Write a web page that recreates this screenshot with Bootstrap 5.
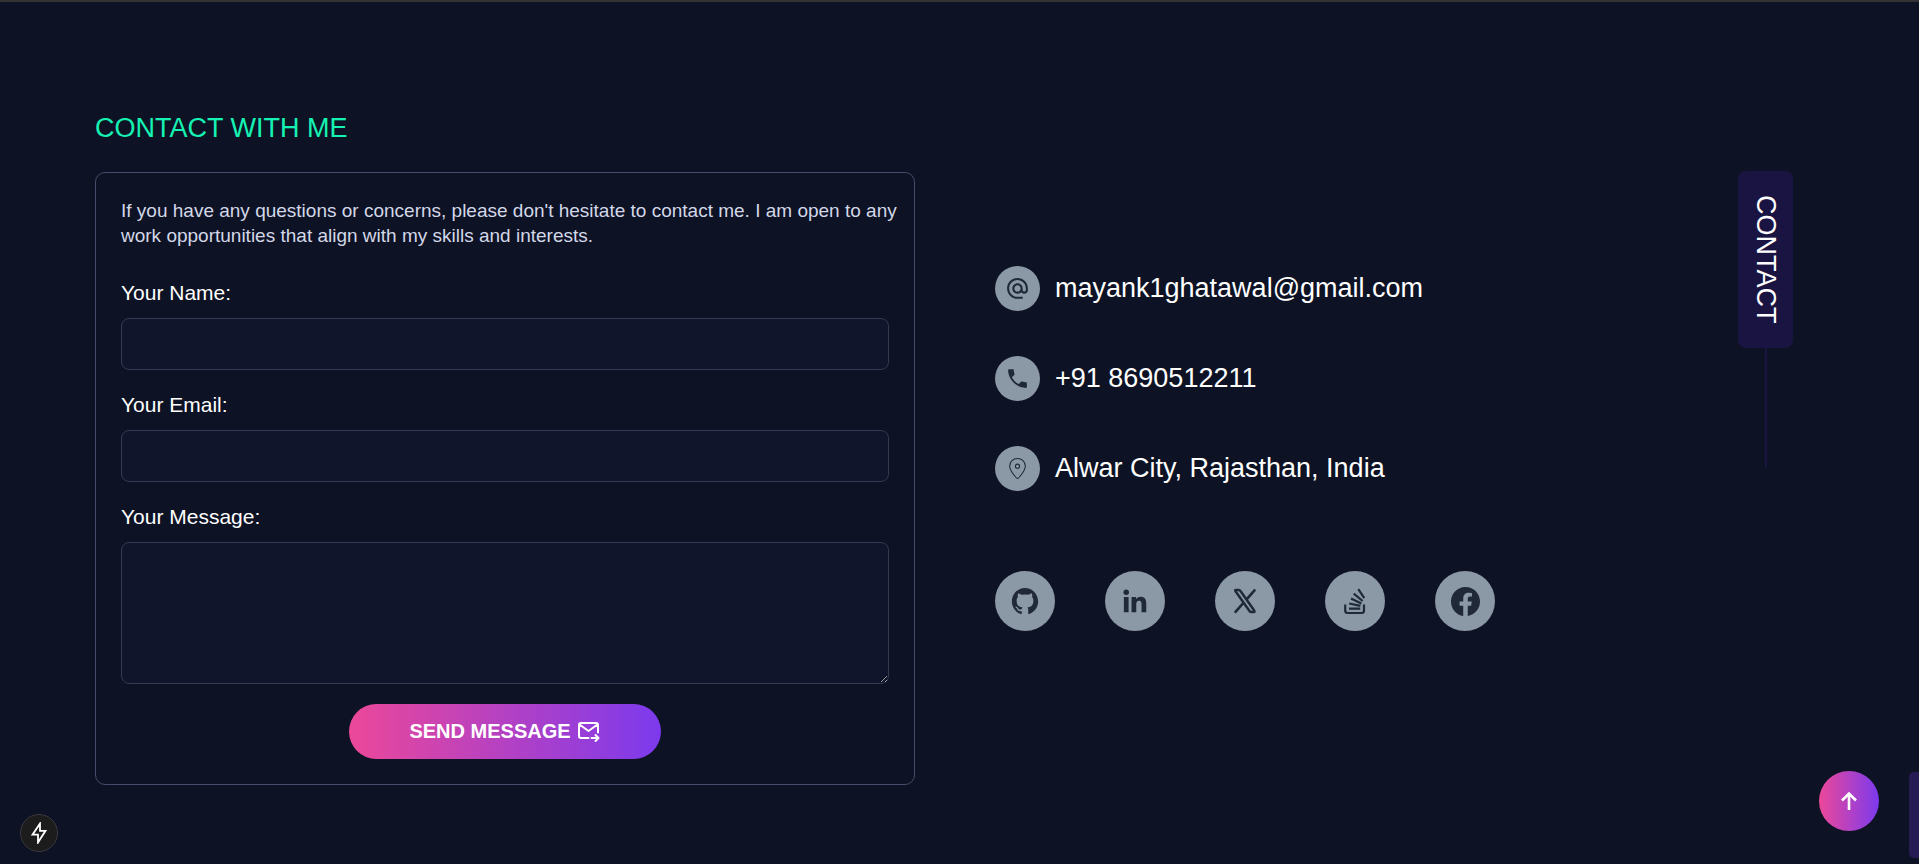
<!DOCTYPE html>
<html lang="en">
<head>
<meta charset="utf-8">
<meta name="viewport" content="width=device-width, initial-scale=1">
<title>Contact</title>
<link href="https://cdn.jsdelivr.net/npm/bootstrap@5.3.0/dist/css/bootstrap.min.css" rel="stylesheet">
<style>
  body { background: #0d1224; color: #fff; font-family: "Liberation Sans", Arial, sans-serif; border-top: 2px solid #333; min-height: 100vh; padding-right: 9px; }
  .contact-wrap { max-width: 1720px; padding-top: 108px; }
  .contact-grid { --bs-gutter-x: 80px; }
  .contact-title { color: #16f2b3; font-size: 27px; line-height: 37px; margin-bottom: 25px; }
  .contact-box { border: 1px solid #464c6a; border-radius: 10px; padding: 25px; }
  .intro { color: #d3d8e8; font-size: 19px; line-height: 25px; margin: 0 -12px 30px 0; }
  .form-label { font-size: 21px; line-height: 30px; margin-bottom: 10px; }
  .form-control, .form-control:focus { background: #11152c; border-color: #353951; border-radius: 8px; color: #fff; height: 52px; }
  .field { margin-bottom: 20px; }
  textarea.form-control, textarea.form-control:focus { height: 142px; display: block; }
  .grad { background: linear-gradient(to right, #ec4899, #7c3aed); color: #fff; border: 0; }
  .send-btn { font-size: 20px; line-height: 30px; font-weight: 700; padding: 12px 60px 13px; gap: 5px; }
  .info-col { padding-top: 2px; }
  .info-list { gap: 45px; font-size: 27px; line-height: 45px; }
  .info-list li { gap: 15px; }
  .info-list a { color: #fff; text-decoration: none; }
  .dot { background: #8b98a5; color: #1f2937; width: 45px; height: 45px; }
  .dot-lg { width: 60px; height: 60px; }
  .socials { gap: 50px; margin-top: 80px; }
  .side-tag { margin: 59px 22px 0 0; }
  .side-text { writing-mode: vertical-rl; background: #1a1443; border-radius: 8px; font-size: 27px; line-height: 35px; padding: 24px 10px; }
  .side-line { width: 2px; height: 119px; background: #1a1443; }
  .to-top { width: 60px; height: 60px; right: 40px; bottom: 33px; }
  .dev-btn { width: 38px; height: 38px; left: 20px; bottom: 12px; background: #1c1c1c; border: 1px solid #3a3a3e; color: #fff; }
  .page-thumb { width: 10px; height: 86px; right: 0; bottom: 6px; background: #261b52; border-radius: 5px 0 0 5px; }
</style>
</head>
<body>
<main class="container-fluid contact-wrap px-0">
  <div class="row contact-grid">
    <section class="col-lg-6">
      <h1 class="contact-title fw-normal">CONTACT WITH ME</h1>
      <form class="contact-box">
        <p class="intro">If you have any questions or concerns, please don't hesitate to contact me. I am open to any work opportunities that align with my skills and interests.</p>
        <div class="field">
          <label class="form-label d-block" for="name">Your Name:</label>
          <input class="form-control" id="name" type="text">
        </div>
        <div class="field">
          <label class="form-label d-block" for="email">Your Email:</label>
          <input class="form-control" id="email" type="email">
        </div>
        <div class="field">
          <label class="form-label d-block" for="message">Your Message:</label>
          <textarea class="form-control" id="message"></textarea>
        </div>
        <div class="d-flex justify-content-center">
          <button class="grad send-btn rounded-pill d-flex align-items-center" type="button">
            <span>SEND MESSAGE</span>
            <svg width="25" height="25" viewBox="0 0 25 25" fill="none" stroke="currentColor" stroke-width="2" stroke-linecap="round" stroke-linejoin="round" aria-hidden="true"><path d="M12.5 19H5Q3 19 3 17V6Q3 4 5 4H20Q22 4 22 6V13.500M3.500 5.500L12.500 12L21.500 5.500M15.500 19H22M19.500 16L22.500 19L19.500 22"/></svg>
          </button>
        </div>
      </form>
    </section>
    <section class="col-lg-6 d-flex justify-content-between info-col">
      <div class="align-self-center">
        <ul class="list-unstyled d-flex flex-column mb-0 info-list">
          <li class="d-flex align-items-center">
            <span class="dot rounded-circle d-flex align-items-center justify-content-center"><svg width="25" height="25" viewBox="0 0 24 24" fill="currentColor" aria-hidden="true"><path d="M12 1.950c-5.520 0-10 4.480-10 10s4.480 10 10 10h5v-2h-5c-4.340 0-8-3.660-8-8s3.660-8 8-8 8 3.660 8 8v1.430c0 .79-.71 1.570-1.500 1.570s-1.500-.78-1.500-1.570v-1.430c0-2.760-2.240-5-5-5s-5 2.240-5 5 2.240 5 5 5c1.380 0 2.640-.56 3.540-1.470.65.89 1.770 1.470 2.960 1.470 1.970 0 3.500-1.600 3.500-3.570v-1.430c0-5.520-4.480-10-10-10zm0 13c-1.660 0-3-1.340-3-3s1.340-3 3-3 3 1.340 3 3-1.340 3-3 3z"/></svg></span>
            <a href="mailto:mayank1ghatawal@gmail.com">mayank1ghatawal@gmail.com</a>
          </li>
          <li class="d-flex align-items-center">
            <span class="dot rounded-circle d-flex align-items-center justify-content-center"><svg width="25" height="25" viewBox="0 0 512 512" fill="currentColor" aria-hidden="true"><path d="M426.666 330.667a250.385 250.385 0 0 1-75.729-11.729c-7.469-2.136-16-1.073-21.332 5.333l-46.939 46.928c-60.802-30.928-109.864-80-140.802-140.803l46.939-46.927c5.332-5.333 7.462-13.864 5.332-21.333-8.537-24.531-12.802-50.136-12.802-76.803C181.333 73.604 171.734 64 160 64H85.333C73.599 64 64 73.604 64 85.333 64 274.136 237.864 448 426.666 448c11.730 0 21.334-9.599 21.334-21.333V352c0-11.729-9.604-21.333-21.334-21.333z"/></svg></span>
            <a href="tel:+918690512211">+91 8690512211</a>
          </li>
          <li class="d-flex align-items-center">
            <span class="dot rounded-circle d-flex align-items-center justify-content-center"><svg width="25" height="25" viewBox="0 0 24 24" fill="none" stroke="currentColor" aria-hidden="true"><path d="M12 21.500C11 21.500 4.500 14 4.500 9.800A7.500 7.500 0 0 1 19.500 9.800C19.500 14 13 21.500 12 21.500Z"/><circle cx="12" cy="9.800" r="2"/></svg></span>
            <span>Alwar City, Rajasthan, India</span>
          </li>
        </ul>
        <nav class="d-flex socials" aria-label="Social profiles">
          <a class="dot dot-lg rounded-circle d-flex align-items-center justify-content-center" href="#" aria-label="GitHub"><svg width="30" height="30" viewBox="0 0 512 512" fill="currentColor"><path d="M256 32C132.300 32 32 134.900 32 261.700c0 101.500 64.200 187.500 153.200 217.900a17.560 17.560 0 003.800.4c8.300 0 11.500-6.100 11.500-11.400 0-5.500-.2-19.900-.3-39.100a102.400 102.400 0 01-22.600 2.700c-43.100 0-52.900-33.500-52.900-33.500-10.200-26.500-24.900-33.600-24.900-33.600-19.500-13.700-.1-14.100 1.400-14.100h.1c22.500 2 34.300 23.800 34.300 23.800 11.200 19.600 26.200 25.100 39.600 25.100a63 63 0 0025.600-6c2-14.800 7.800-24.900 14.200-30.700-49.700-5.800-102-25.500-102-113.500 0-25.100 8.700-45.600 23-61.600-2.300-5.800-10-29.200 2.200-60.800a18.640 18.640 0 015-.5c8.100 0 26.400 3.100 56.600 24.100a208.210 208.210 0 01112.200 0c30.200-21 48.500-24.100 56.600-24.100a18.640 18.640 0 015 .5c12.200 31.600 4.500 55 2.200 60.800 14.300 16.100 23 36.600 23 61.600 0 88.200-52.400 107.600-102.300 113.300 8 7.100 15.200 21.100 15.200 42.500 0 30.700-.3 55.500-.3 63 0 5.400 3.100 11.500 11.400 11.500a19.350 19.350 0 004-.4C415.900 449.200 480 363.100 480 261.700 480 134.900 379.700 32 256 32z"/></svg></a>
          <a class="dot dot-lg rounded-circle d-flex align-items-center justify-content-center" href="#" aria-label="LinkedIn"><svg width="30" height="30" viewBox="0 0 24 24" fill="currentColor"><circle cx="4.983" cy="5.009" r="2.188"/><path d="M9.237 8.855v12.139h3.769v-6.003c0-1.584.298-3.118 2.262-3.118 1.937 0 1.961 1.811 1.961 3.218v5.904H21v-6.657c0-3.270-.704-5.783-4.526-5.783-1.835 0-3.065 1.007-3.568 1.960h-.051v-1.660H9.237zm-6.142 0H6.870v12.139H3.095z"/></svg></a>
          <a class="dot dot-lg rounded-circle d-flex align-items-center justify-content-center" href="#" aria-label="X"><svg width="30" height="30" viewBox="0 0 30 30" fill="none" stroke="currentColor" stroke-width="2.400" stroke-linecap="round" stroke-linejoin="round"><path d="M5.500 4H8.800Q9.800 4 10.500 5L24.200 24.500Q25 26 23.800 26H21.200Q20.200 26 19.500 25L5.500 5.200Q4.800 4 5.500 4Z"/><path d="M24.500 4.300L17 12.800M13 17.300L5.500 25.800" stroke-width="2.600"/></svg></a>
          <a class="dot dot-lg rounded-circle d-flex align-items-center justify-content-center" href="#" aria-label="Stack Overflow"><svg width="30" height="30" viewBox="0 0 30 30" fill="none" stroke="currentColor" stroke-width="2.200"><path d="M5.200 18.400V24.500Q5.200 27 7.600 27H21.700Q24 27 24 24.500V18.400" stroke-linejoin="round"/><path d="M9 22.600H20.200M9.200 17.500L20.400 19.900M11 12.500L21.400 17.600M13.800 7.700L22.600 15M18.300 3.200L24.300 12.200"/></svg></a>
          <a class="dot dot-lg rounded-circle d-flex align-items-center justify-content-center" href="#" aria-label="Facebook"><svg width="29" height="29" viewBox="0 0 16 16" fill="currentColor"><path d="M16 8.049c0-4.446-3.582-8.050-8-8.050C3.580 0-.002 3.603-.002 8.050c0 4.017 2.926 7.347 6.750 7.951v-5.625h-2.030V8.050H6.750V6.275c0-2.017 1.195-3.131 3.022-3.131.876 0 1.791.157 1.791.157v1.980h-1.009c-.993 0-1.303.621-1.303 1.258v1.510h2.218l-.354 2.326H9.250V16c3.824-.604 6.750-3.934 6.750-7.951z"/></svg></a>
        </nav>
      </div>
      <div class="side-tag d-none d-lg-flex flex-column align-items-center">
        <span class="side-text">CONTACT</span>
        <span class="side-line"></span>
      </div>
    </section>
  </div>
</main>

<button class="dev-btn rounded-circle position-fixed d-flex align-items-center justify-content-center p-0" type="button" aria-label="Developer tools">
  <svg width="20" height="22" viewBox="0 0 20 22" fill="none" stroke="currentColor" stroke-width="1.800"><path d="M11 1.500L3.500 12.700H9V20.500L16.500 8.800H11Z"/></svg>
</button>
<button class="grad to-top rounded-circle position-fixed d-flex align-items-center justify-content-center p-0" type="button" aria-label="Back to top">
  <svg width="20" height="20" viewBox="0 0 20 20" fill="none" stroke="currentColor" stroke-width="2.600"><path d="M10 19V3M3 9.500L10 2.500L17 9.500"/></svg>
</button>
<div class="page-thumb position-fixed"></div>
<script src="https://cdn.jsdelivr.net/npm/bootstrap@5.3.0/dist/js/bootstrap.bundle.min.js"></script>
</body>
</html>
